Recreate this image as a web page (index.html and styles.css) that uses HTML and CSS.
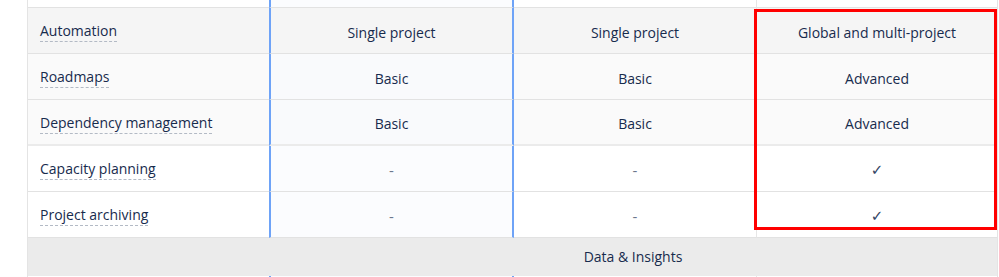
FILE: index.html
```html
<!DOCTYPE html>
<html>

<head>
  <title>Plan comparison</title>
  <meta name="viewport" content="width=device-width, initial-scale=1">
  <link rel="stylesheet" href="styles.css">
</head>

<body>
  <div class="compare">
    <div class="grid">
      <!-- tail of the previous row -->
      <div class="cell lead stub"></div>
      <div class="cell plan stub"></div>
      <div class="cell stub"></div>
      <div class="cell last stub"></div>

      <div class="cell lead shade-1"><span class="term">Automation</span></div>
      <div class="cell plan shade-1">Single project</div>
      <div class="cell shade-1">Single project</div>
      <div class="cell last shade-1">Global and multi-project</div>

      <div class="cell lead shade-2"><span class="term">Roadmaps</span></div>
      <div class="cell plan shade-2">Basic</div>
      <div class="cell shade-2">Basic</div>
      <div class="cell last shade-2">Advanced</div>

      <div class="cell lead shade-2 split"><span class="term">Dependency management</span></div>
      <div class="cell plan shade-2 split">Basic</div>
      <div class="cell shade-2 split">Basic</div>
      <div class="cell last shade-2 split">Advanced</div>

      <div class="cell lead"><span class="term">Capacity planning</span></div>
      <div class="cell plan"><span class="none">-</span></div>
      <div class="cell"><span class="none">-</span></div>
      <div class="cell last"><span class="tick">&#10003;</span></div>

      <div class="cell lead"><span class="term">Project archiving</span></div>
      <div class="cell plan"><span class="none">-</span></div>
      <div class="cell"><span class="none">-</span></div>
      <div class="cell last"><span class="tick">&#10003;</span></div>

      <div class="section">
        <div></div>
        <div class="section-title">Data &amp; Insights</div>
      </div>

      <div class="cell lead stub"></div>
      <div class="cell plan stub"></div>
      <div class="cell stub"></div>
      <div class="cell last stub"></div>
    </div>

    <!-- highlight around the premium column -->
    <div class="mark"></div>
  </div>
</body>

</html>
```

FILE: styles.css
```css
body {
  margin: 0;
  background: #ffffff;
  font-family: "Open Sans", "Noto Sans", sans-serif;
  font-size: 14px;
  color: #172b4d;
  overflow: hidden;
}

.compare {
  position: relative;
  width: 971px;
  margin-left: 27px;
}

.grid {
  display: grid;
  grid-template-columns: 241px 245px 242px 1fr;
  border-left: 1px solid #e4e4e4;
  border-right: 1px solid #e4e4e4;
}

.cell {
  height: 46px;
  box-sizing: border-box;
  display: flex;
  align-items: center;
  justify-content: center;
  padding-top: 3px;
  border-bottom: 1px solid #e2e2e2;
  background: #ffffff;
}

.cell.stub {
  height: 8px;
  padding-top: 0;
}

.cell.lead {
  justify-content: flex-start;
  padding-left: 12px;
}

.cell.plan {
  border-left: 2px solid #6ea3f7;
  border-right: 2px solid #6ea3f7;
  background: #fbfcfe;
}

.cell.last {
  border-left: 1px solid #e6e6e6;
}

.shade-1,
.cell.plan.shade-1 {
  background: #f5f5f5;
}

.shade-2 {
  background: #fafafa;
}

.cell.plan.shade-2 {
  background: #f9fafc;
}

.cell.split {
  border-bottom: 2px solid #ebebeb;
}

.term {
  padding-bottom: 1px;
  border-bottom: 1px dashed #b3bac5;
  line-height: 18px;
}

.none {
  color: #6b778c;
  font-size: 15px;
}

.tick {
  color: #344563;
  font-family: "DejaVu Sans", sans-serif;
  font-size: 15px;
}

.section {
  grid-column: 1 / -1;
  display: grid;
  grid-template-columns: 241px 1fr;
  height: 38px;
  background: #ebebeb;
}

.section-title {
  display: flex;
  align-items: center;
  justify-content: center;
  padding-bottom: 2px;
}

.mark {
  position: absolute;
  left: 727px;
  top: 9px;
  width: 243px;
  height: 221px;
  box-sizing: border-box;
  border: 3px solid #ff0000;
  pointer-events: none;
}
```
